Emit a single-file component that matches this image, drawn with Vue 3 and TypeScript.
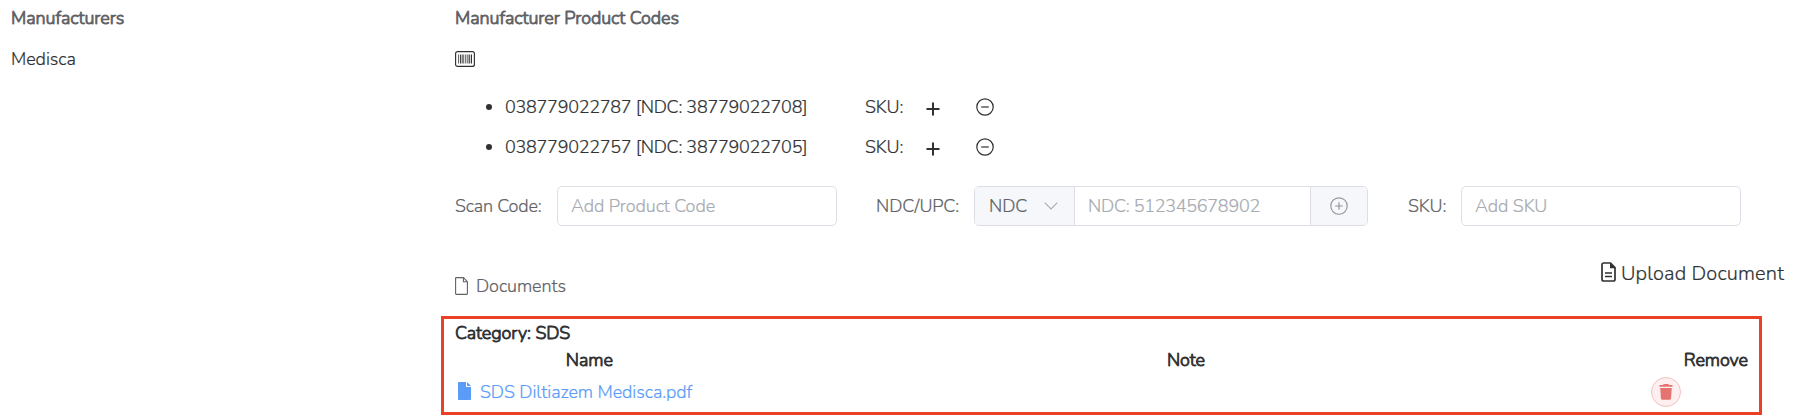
<script setup lang="ts">
import { ref } from 'vue'

interface ProductCode {
  code: string
  ndc: string
}

const codes: ProductCode[] = [
  { code: '038779022787', ndc: '38779022708' },
  { code: '038779022757', ndc: '38779022705' },
]
const scanCode = ref('')
const ndcCode = ref('')
const sku = ref('')
</script>

<template>
  <main class="page">
    <section class="manufacturers">
      <h2 class="heading">Manufacturers</h2>
      <p class="maker">Medisca</p>
    </section>

    <section class="products">
      <h2 class="heading">Manufacturer Product Codes</h2>
      <svg class="barcode" viewBox="0 0 20 16">
        <rect x="0.6" y="0.6" width="18.8" height="14.8" rx="2" fill="none" stroke="#303133" stroke-width="1.15" />
        <path d="M3.6 3.5v9M10.3 3.5v9M12.2 3.5v9" stroke="#303133" stroke-width=".8" />
        <path d="M5.7 3.5v9M8 3.5v9M14.2 3.5v9M16.4 3.5v9" stroke="#303133" stroke-width="1.2" />
      </svg>

      <ul class="codes">
        <li v-for="item in codes" :key="item.code">
          <i class="bullet"></i>
          <span class="code">{{ item.code }} [NDC: {{ item.ndc }}]</span>
          <span class="sku">SKU:</span>
          <svg class="plus" viewBox="0 0 14 14"><path d="M7 .5v13M.5 7h13" stroke="#303133" stroke-width="2" /></svg>
          <svg class="minus" viewBox="0 0 18 18" fill="none" stroke="#303133" stroke-width="1.2">
            <circle cx="9" cy="9" r="8.2" /><path d="M5.2 9h7.6" />
          </svg>
        </li>
      </ul>

      <form class="form" @submit.prevent>
        <label class="field scan"><span>Scan Code:</span><input v-model="scanCode" placeholder="Add Product Code" /></label>
        <div class="field ndc">
          <span>NDC/UPC:</span>
          <div class="group">
            <button type="button" class="select">
              NDC
              <svg viewBox="0 0 14 8"><path d="M.7.7 7 7 13.3.7" fill="none" stroke="#a8abb2" stroke-width="1.1" /></svg>
            </button>
            <input v-model="ndcCode" placeholder="NDC: 512345678902" />
            <button type="button" class="add">
              <svg viewBox="0 0 18 18" fill="none" stroke="#909399" stroke-width="1.15">
                <circle cx="9" cy="9" r="8.2" /><path d="M5.2 9h7.6M9 5.2v7.6" />
              </svg>
            </button>
          </div>
        </div>
        <label class="field last"><span>SKU:</span><input v-model="sku" placeholder="Add SKU" /></label>
      </form>

      <div class="docs-bar">
        <div class="docs">
          <svg viewBox="0 0 13 18" fill="none" stroke="#606266" stroke-width="1.1">
            <path d="M8.4.6H1.2Q.6.6.6 1.2v15.6q0 .6.6.6h10.6q.6 0 .6-.6V4.7zM8.4.8v3.9h3.9" />
          </svg>
          Documents
        </div>
        <div class="upload">
          <svg viewBox="0 0 15 20">
            <path d="M9.5 1H2.8Q1 1 1 2.8v14.4Q1 19 2.8 19h9.4q1.8 0 1.8-1.8V5.6z" fill="none" stroke="#303133" stroke-width="1.7" />
            <path d="M9 1v5.3h5.2z" fill="#303133" /><path d="M4 10.9h7M4 14.6h7" stroke="#303133" stroke-width="1.5" />
          </svg>
          Upload Document
        </div>
      </div>

      <section class="category">
        <h3>Category: SDS</h3>
        <div class="cols">
          <b class="name">Name</b><b class="note">Note</b><b class="remove">Remove</b>
        </div>
        <div class="file-row">
          <a class="file">
            <svg viewBox="0 0 13 18"><path d="M0 .8Q0 0 .8 0H8v5h5v12.2q0 .8-.8.8H.8Q0 18 0 17.2zM9 0l4 4H9z" fill="#5a9cf8" /></svg>
            SDS Diltiazem Medisca.pdf
          </a>
          <button type="button" class="trash">
            <svg viewBox="0 0 14 16" fill="#e57470"><path d="M4.2 1V.4Q4.2 0 4.7 0h4.6q.5 0 .5.4V1H13q.6 0 .6.6V2.7H.4V1.6Q.4 1 1 1zM1.2 4.1h11.6l-.8 10.6q-.1 1.1-1.2 1.1H3.2q-1.1 0-1.2-1.1z" /></svg>
          </button>
        </div>
      </section>
    </section>
  </main>
</template>

<style>
html, body { background: #fff; }
</style>

<style scoped>
.page {
  display: flex;
  width: 1798px;
  height: 417px;
  overflow: hidden;
  box-sizing: border-box;
  font: 300 18px/24px Nunito, Lato, sans-serif;
  letter-spacing: -0.08px;
  color: #303133;
  -webkit-text-stroke: 0.2px currentColor;
}
svg { display: block; flex: none; }
h2, h3, p, ul { margin: 0; padding: 0; }
.manufacturers { width: 444px; padding: 6px 0 0 11px; box-sizing: border-box; flex: none; }
.products { width: 1354px; padding-top: 6px; flex: none; }
.heading, h3, b { font-size: 18px; font-weight: 300; -webkit-text-stroke: 0.85px currentColor; }
.heading { color: #606266; }
.products .heading { padding-left: 11px; }
.maker { margin-top: 17px; }
.barcode { width: 20px; height: 16px; margin: 21px 0 0 11px; }
.codes { list-style: none; margin-top: 20px; }
.codes li { display: flex; align-items: center; height: 40px; padding-left: 42px; }
.bullet { width: 6px; height: 6px; border-radius: 50%; background: #303133; margin-right: 13px; }
.code { width: 360px; letter-spacing: -0.27px; }
.sku { width: 61px; }
.plus { width: 14px; height: 14px; margin: 3px 0 0; }
.minus { width: 18px; height: 18px; margin-left: 36px; }
.form { display: flex; margin-top: 19px; padding-left: 11px; color: #606266; }
.field { display: flex; align-items: center; height: 40px; flex: none; }
.scan { width: 421px; }
.scan span { width: 102px; letter-spacing: -0.17px; }
.ndc { width: 532px; }
.ndc > span { width: 98px; }
.last span { width: 53px; }
input, button { font: inherit; letter-spacing: inherit; color: #606266; box-sizing: border-box; outline: none; }
.field input { width: 280px; height: 40px; padding: 0 13px; border: 1px solid #dcdfe6; border-radius: 5px; background: #fff; }
input::placeholder { color: #a8abb2; opacity: 1; }
.group { display: flex; width: 394px; height: 40px; border: 1px solid #dcdfe6; border-radius: 5px; box-sizing: border-box; overflow: hidden; }
.field .group input { flex: 1; width: 0; height: 38px; border: 0; border-radius: 0; padding: 0 13px; letter-spacing: -0.27px; }
.group button { border: 0; background: #f5f7fa; padding: 0; height: 38px; display: flex; align-items: center; }
.group .select { width: 100px; padding: 0 16px 0 14px; justify-content: space-between; border-right: 1px solid #dcdfe6; }
.select svg { width: 14px; height: 8px; }
.group .add { width: 57px; justify-content: center; border-left: 1px solid #dcdfe6; }
.add svg { width: 18px; height: 18px; }
.docs-bar { display: flex; justify-content: space-between; height: 90px; padding: 0 14px 0 11px; }
.docs { display: flex; align-items: center; gap: 8px; height: 24px; margin-top: 48px; color: #606266; }
.docs svg { width: 13px; height: 18px; }
.upload { display: flex; align-items: center; gap: 5px; height: 24px; margin-top: 36px; font-size: 20px; letter-spacing: 0.16px; }
.upload svg { width: 15px; height: 20px; margin-top: -4px; }
.category { width: 1321px; height: 99px; margin-left: -3px; padding: 2px 11px 0; border: 3px solid #ea4025; box-sizing: border-box; }
.cols { display: flex; height: 24px; margin-top: 3px; }
.name { width: 269px; text-align: center; }
.note { width: 925px; text-align: center; }
.remove { width: 100px; text-align: right; }
.file-row { display: flex; align-items: center; justify-content: space-between; height: 32px; padding: 4px 67px 0 3px; }
.file { display: flex; align-items: center; gap: 9px; color: #5a9cf8; }
.file svg { width: 13px; height: 18px; margin-top: -3px; }
.trash { width: 30px; height: 30px; padding: 0; border: 1px solid #f5c0c0; border-radius: 50%; background: #fdefef; display: grid; place-items: center; }
.trash svg { width: 14px; height: 16px; margin-top: -1px; }
</style>
